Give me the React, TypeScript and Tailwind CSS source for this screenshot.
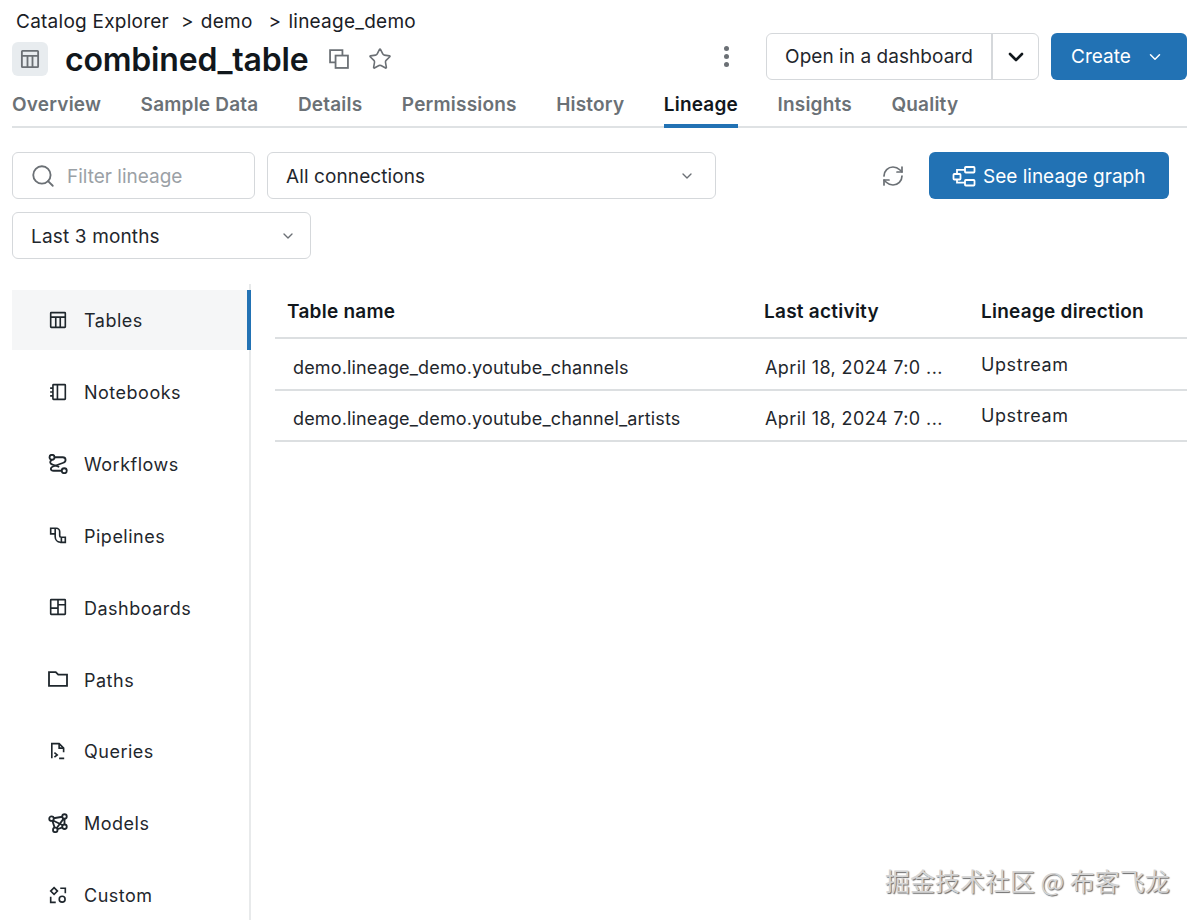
import { ChevronDown, RefreshCw, Search, Star } from 'lucide-react';
import type { ReactNode } from 'react';

const icon = (children: ReactNode, className = 'w-[18px] h-[18px]') => (
  <svg viewBox="0 0 16 16" fill="none" stroke="currentColor" strokeWidth="1.45" className={`${className} shrink-0`}>
    {children}
  </svg>
);

const TableIcon = ({ className }: { className?: string }) =>
  icon(
    <>
      <rect x="1.5" y="1.5" width="13" height="13" rx="0.5" />
      <path d="M1.5 5.5h13M6 5.5v9M10 5.5v9" />
    </>,
    className,
  );

const sections: { label: string; icon: ReactNode }[] = [
  { label: 'Tables', icon: <TableIcon /> },
  {
    label: 'Notebooks',
    icon: icon(
      <>
        <rect x="3.5" y="1.5" width="11" height="13" rx="0.5" />
        <path d="M7.5 1.5v13M1 4.5h2.5M1 8h2.5M1 11.5h2.5" />
      </>,
    ),
  },
  {
    label: 'Workflows',
    icon: icon(
      <>
        <circle cx="3.2" cy="2.6" r="2" />
        <circle cx="13" cy="13.4" r="2" />
        <path d="M5.3 2.6H11.8C14.6 2.6 14.8 6.2 12.3 7L4 10C1.5 10.9 1.8 13.4 4.5 13.4H11" />
        <path d="M3.2 4.7C1.2 5.6 1.2 7.8 3.5 8.4L9 10.3" />
      </>,
      'w-[20px] h-[20px] -ml-[1px] -mr-[1px]',
    ),
  },
  {
    label: 'Pipelines',
    icon: icon(<path d="M1.5 7V2h5a3 3 0 0 1 3 3v3.5a1.5 1.5 0 0 0 1.5 1.5h3.5v4.5H10a5 5 0 0 1-4.5-5V7zM5.5 2v5M11 10v4.5" />),
  },
  {
    label: 'Dashboards',
    icon: icon(
      <>
        <rect x="1.5" y="1.5" width="13" height="13" rx="0.5" />
        <path d="M8 1.5v13M1.5 9h6.5M8 6h6.5" />
      </>,
    ),
  },
  {
    label: 'Paths',
    icon: icon(<path d="M0.8 2.5h5.4l2 2h7v9H0.8z" />, 'w-[20px] h-[20px] -ml-[1px] -mr-[1px]'),
  },
  {
    label: 'Queries',
    icon: icon(
      <>
        <path d="M2.5 14.5V1.5h6.5l4 4V9" />
        <path d="M9 1.5v4h4" />
        <path d="M4.8 9.5l2.5 2-2.5 2M9 14.5h4.5" />
      </>,
    ),
  },
  {
    label: 'Models',
    icon: icon(
      <>
        <circle cx="2.8" cy="4.5" r="1.8" />
        <circle cx="13.2" cy="2.8" r="1.8" />
        <circle cx="13.2" cy="11" r="1.8" />
        <circle cx="5.8" cy="13.5" r="1.8" />
        <path d="M4.5 4.2l7-1.2M4 6l7.8 3.8M3.5 6.2l1.8 5.5M12.5 4.5L7 12M7.5 13l4-1.5M13.2 4.6v4.6" />
      </>,
      'w-[20px] h-[20px] -ml-[1px] -mr-[1px]',
    ),
  },
  {
    label: 'Custom',
    icon: icon(
      <>
        <path d="M4.5 1.5l3 3-3 3-3-3z" />
        <path d="M10 2h4.5v4.5M1.5 9.5v5H6" />
        <circle cx="11.7" cy="11.7" r="2.6" />
      </>,
    ),
  },
];

const tabs = ['Overview', 'Sample Data', 'Details', 'Permissions', 'History', 'Lineage', 'Insights', 'Quality'];

const rows = ['demo.lineage_demo.youtube_channels', 'demo.lineage_demo.youtube_channel_artists'];

export default function App() {
  return (
    <div className="relative w-[1195px] h-[920px] overflow-hidden bg-white pl-3 pr-2 text-[#1f272d] font-['Inter','Noto_Sans',sans-serif]">
      <div className="flex justify-between h-[84px]">
        <div className="pt-[8px]">
          <div className="pl-1 pt-[2px] h-[26px] flex items-center text-[19px] tracking-[0.25px] text-[#1a2025]">
            <span>Catalog Explorer</span>
            <span className="ml-[12px] mr-[2px]">&gt;</span>
            <span className="ml-[5px]">demo</span>
            <span className="ml-[16px] mr-[2px]">&gt;</span>
            <span className="ml-[5px]">lineage_demo</span>
          </div>
          <div className="flex items-center mt-[8px] h-[34px]">
            <div className="w-9 h-[34px] rounded-md bg-[#e8ecef] flex items-center justify-center text-[#6b7075]">
              <TableIcon className="w-[20px] h-[20px]" />
            </div>
            <h1 className="ml-[17px] pt-[2px] text-[32px] tracking-[-0.2px] font-semibold text-[#11171c] leading-none">combined_table</h1>
            <svg viewBox="0 0 16 16" fill="none" stroke="#6b7075" strokeWidth="1.3" className="w-[22px] h-[22px] ml-[20px]">
              <path d="M5.5 10.5h-4v-9h9v4" />
              <rect x="5.5" y="5.5" width="9" height="9" />
            </svg>
            <Star className="w-[24px] h-[24px] ml-[18px] text-[#6b7075]" strokeWidth={1.6} />
          </div>
        </div>
        <div className="pt-[33px] flex items-start">
          <div className="flex flex-col gap-[3px] mt-[13px] mr-[37px]">
            <span className="w-[5px] h-[5px] rounded-full bg-[#6b7075]" />
            <span className="w-[5px] h-[5px] rounded-full bg-[#6b7075]" />
            <span className="w-[5px] h-[5px] rounded-full bg-[#6b7075]" />
          </div>
          <div className="flex h-[47px] border border-[#d5d8db] rounded-md">
            <div className="w-[226px] pt-[2px] flex items-center justify-center text-[19px] tracking-[0.05px] border-r-2 border-[#d5d8db]">Open in a dashboard</div>
            <div className="w-[45px] flex items-center justify-center">
              <ChevronDown className="w-[24px] h-[24px] text-[#11171c]" strokeWidth={2.6} />
            </div>
          </div>
          <div className="ml-3 w-[136px] h-[47px] rounded-md bg-[#2272b4] text-white text-[19px] flex items-center pl-5">
            <span className="pt-[2px]">Create</span>
            <ChevronDown className="w-[18px] h-[18px] ml-[15px]" strokeWidth={2} />
          </div>
        </div>
      </div>

      <div className="flex gap-[39.5px] h-[44px] border-b-2 border-[#dfe2e4] w-[1175px]">
        {tabs.map((tab) => (
          <div
            key={tab}
            className={
              tab === 'Lineage'
                ? 'h-[44px] pt-[7px] text-[19px] tracking-[0.2px] font-semibold text-[#11171c] border-b-4 border-[#2272b4]'
                : 'h-[44px] pt-[7px] text-[19px] tracking-[0.2px] font-semibold text-[#6b7176]'
            }
          >
            {tab}
          </div>
        ))}
      </div>

      <div className="flex items-center mt-[24px] w-[1157px]">
        <div className="w-[243px] h-[47px] border border-[#d5d8db] rounded-md flex items-center pl-[17px] gap-[11px] text-[19px] text-[#9ba1a6]">
          <Search className="w-[26px] h-[26px] text-[#6b7075] shrink-0" strokeWidth={1.7} />
          <span className="pt-[3px]">Filter lineage</span>
        </div>
        <div className="ml-3 w-[449px] h-[47px] border border-[#d5d8db] rounded-md flex items-center justify-between pl-[18px] pr-[20px] text-[19px] tracking-[0.1px]">
          <span className="pt-[3px]">All connections</span>
          <ChevronDown className="w-[16px] h-[16px] text-[#6b7075]" strokeWidth={2} />
        </div>
        <RefreshCw className="w-[24px] h-[24px] ml-auto mr-[24px] text-[#6b7075]" strokeWidth={1.7} />
        <div className="w-[240px] h-[47px] rounded-md bg-[#2272b4] text-white text-[19px] flex items-center pl-[23px] gap-[7px]">
          <svg viewBox="0 0 24 24" fill="none" stroke="currentColor" strokeWidth="1.8" className="w-[24px] h-[24px] shrink-0">
            <rect x="1.5" y="10" width="7" height="5.5" rx="0.8" />
            <rect x="13" y="3" width="9.5" height="5.5" rx="0.8" />
            <rect x="13" y="16" width="9.5" height="5.5" rx="0.8" />
            <path d="M5 10V5.8h8M5 15.5v3.2h8" />
          </svg>
          <span className="pt-[3px]">See lineage graph</span>
        </div>
      </div>

      <div className="mt-[13px] w-[299px] h-[47px] border border-[#d5d8db] rounded-md flex items-center justify-between pl-[18px] pr-[14px] text-[19px] tracking-[0.15px]">
        <span className="pt-[3px]">Last 3 months</span>
        <ChevronDown className="w-[16px] h-[16px] text-[#6b7075]" strokeWidth={2} />
      </div>

      <div className="flex mt-[25px]">
        <div className="w-[239px] h-[636px] shrink-0 border-r-2 border-[#e8eaeb]">
          {sections.map((section) => (
            <div key={section.label} className="h-[71.85px] flex items-center">
              <div
                className={
                  section.label === 'Tables'
                    ? 'w-[239px] -mr-[2px] h-[60px] flex items-center gap-[17px] pl-[37px] text-[18px] tracking-[0.5px] bg-[#f5f6f7] border-r-4 border-[#2272b4]'
                    : 'h-[60px] flex items-center gap-[17px] pl-[37px] text-[18px] tracking-[0.5px]'
                }
              >
                {section.icon}
                <span className="pt-[2px]">{section.label}</span>
              </div>
            </div>
          ))}
        </div>

        <div className="ml-[24px] w-[912px] text-[18px]">
          <div className="grid grid-cols-[489px_217px_1fr] h-[55px] items-center border-b-2 border-[#dcdfe1] font-semibold text-[#11171c] text-[19px] tracking-[0.25px]">
            <div className="pl-[12px] pt-[3px]">Table name</div>
            <div className="pt-[3px]">Last activity</div>
            <div className="pt-[3px]">Lineage direction</div>
          </div>
          {rows.map((name) => (
            <div key={name} className="grid grid-cols-[489px_217px_1fr] h-[51.5px] items-center border-b-2 border-[#dcdfe1]">
              <div className="pl-[18px] pt-[7px] tracking-[0.15px]">{name}</div>
              <div className="pl-[1px] pt-[7px] tracking-[0.4px]">April 18, 2024 7:0 ...</div>
              <div className="pt-[1px] tracking-[0.6px]">Upstream</div>
            </div>
          ))}
        </div>
      </div>

      <div className="absolute left-[885px] top-[863px] text-[25px] leading-[34px] whitespace-nowrap text-[#d4d4d4] [text-shadow:1px_1px_1px_#6b6b6b] font-['Noto_Sans_CJK_SC','Noto_Sans',sans-serif]">
        掘金技术社区 @ 布客飞龙
      </div>
    </div>
  );
}
